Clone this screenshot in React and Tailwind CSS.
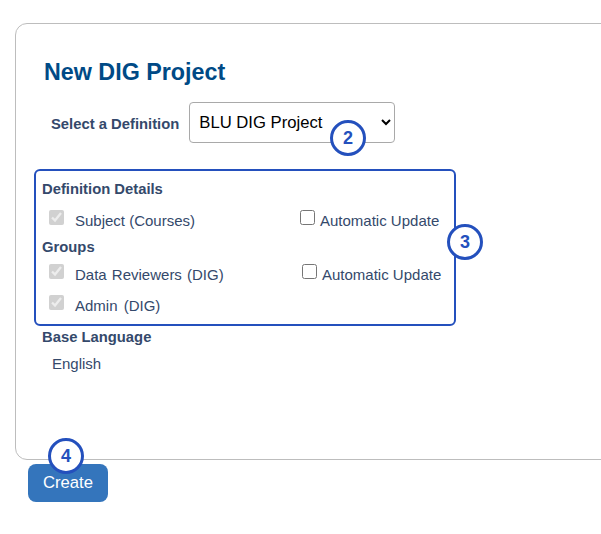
const font = 'font-["Liberation_Sans",Arial,sans-serif]';

function Badge({ n, className }) {
  return (
    <span className={`absolute flex h-[36px] w-[36px] items-center justify-center rounded-full border-[3px] border-[#2450bd] bg-white text-[18px] font-bold text-[#2450bd] ${className}`}>
      {n}
    </span>
  );
}

function Check({ label, auto, autoClass, labelClass }) {
  return (
    <div className="flex h-[31px] items-center">
      <input type="checkbox" checked disabled readOnly className="ml-[7px] h-[15px] w-[15px] -translate-y-[4px]" />
      <span className={`ml-[11px] w-[225px] ${labelClass}`}>{label}</span>
      {auto ? (
        <label className={`flex items-center ${autoClass}`}>
          <input type="checkbox" readOnly className="h-[15px] w-[15px] -translate-y-[4px]" />
          <span className="ml-[5px]">Automatic Update</span>
        </label>
      ) : null}
    </div>
  );
}

function App() {
  return (
    <div className={`relative h-[534px] w-[601px] overflow-hidden bg-white pt-[23px] text-[15px] text-[#34496b] ${font}`}>
      <div className="ml-[15px] h-[437px] w-[700px] rounded-l-[12px] border border-[#bdbdbd] pl-[18px] pt-[33px]">
        <h1 className="ml-[10px] text-[23.3px] leading-[30px] font-bold text-[#004a86]">New DIG Project</h1>
        <div className="mt-[15px] ml-[17px] flex items-center">
          <span className="pt-[4px] text-[14.8px] font-bold">Select a Definition</span>
          <select defaultValue="blu" className="ml-[10px] h-[41px] w-[206px] rounded-[4px] border border-[#a9a9a9] bg-white pl-[5px] text-[16.67px] text-black">
            <option value="blu">BLU DIG Project</option>
          </select>
        </div>
        <div className="mt-[26px] h-[157px] w-[422px] rounded-[6px] border-2 border-[#2450bd] px-[6px] pt-[9px]">
          <div className="text-[14.8px] leading-[18px] font-bold">Definition Details</div>
          <div className="mt-[8px]">
            <Check label="Subject (Courses)" auto autoClass="ml-0" />
          </div>
          <div className="mt-[1px] text-[14.8px] leading-[18px] font-bold">Groups</div>
          <div className="mt-[4px]">
            <Check label="Data Reviewers (DIG)" auto autoClass="ml-[2px]" labelClass="[word-spacing:1px]" />
            <Check label="Admin (DIG)" labelClass="[word-spacing:2px]" />
          </div>
        </div>
        <div className="mt-[2px] ml-[8px] text-[14.8px] leading-[18px] font-bold">Base Language</div>
        <div className="mt-[9px] ml-[18px] leading-[18px]">English</div>
      </div>
      <button className="mt-[4px] ml-[28px] h-[38px] w-[80px] rounded-[8px] bg-[#3475bc] pb-[1px] text-[16.67px] text-white">Create</button>
      <Badge n="2" className="left-[330px] top-[120px]" />
      <Badge n="3" className="left-[447px] top-[224px]" />
      <Badge n="4" className="left-[48px] top-[438px]" />
    </div>
  );
}

export default App;
